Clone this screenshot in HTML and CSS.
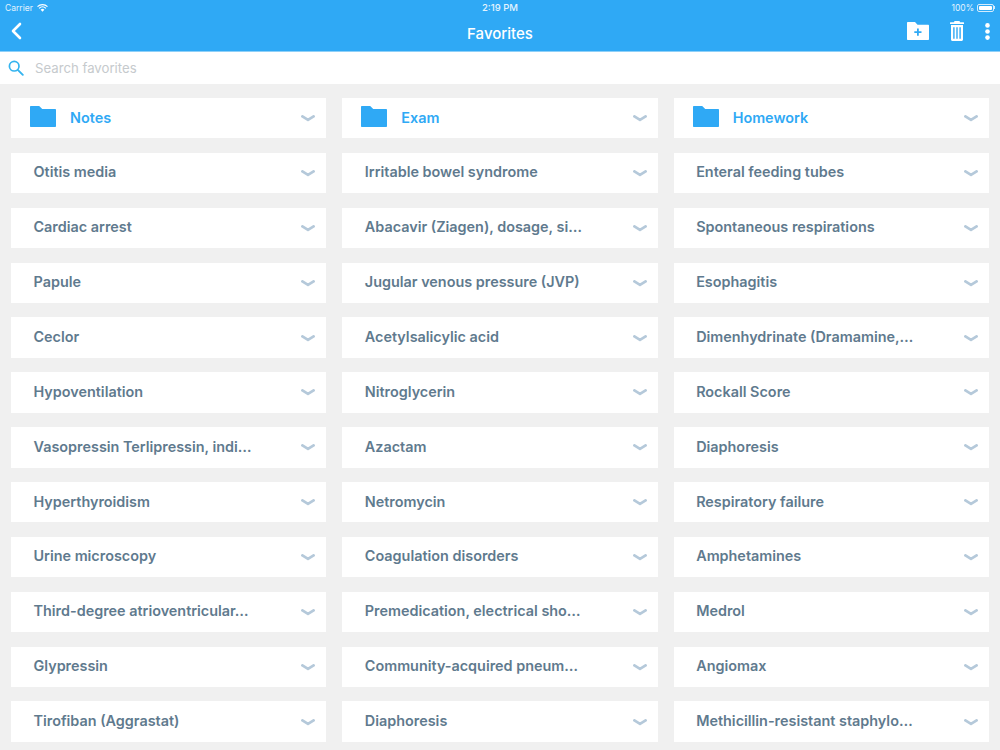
FILE: index.html
```html
<!DOCTYPE html>
<html lang="en">
<head>
<meta charset="utf-8">
<title>Favorites</title>
<link rel="stylesheet" href="styles.css">
</head>
<body>
<svg class="defs" width="0" height="0" aria-hidden="true">
  <symbol id="chev" viewBox="0 0 14 7"><path d="M1.400 1.400 7 4.900l5.600-3.500" fill="none" stroke="currentColor" stroke-width="2.700" stroke-linecap="round" stroke-linejoin="round"/></symbol>
  <symbol id="folder" viewBox="0 0 26 21"><path d="M0 1C0 .4.400 0 1 0h8.200l3 3H25c.6 0 1 .4 1 1v16c0 .6-.4 1-1 1H1c-.6 0-1-.4-1-1z" fill="#2fa9f5"/></symbol>
</svg>
<header class="appbar">
  <div class="status">
    <div class="status-left"><span>Carrier</span>
      <svg width="11" height="8" viewBox="0 0 12 9"><path d="M.4 3a8 8 0 0 1 11.200 0M2.200 4.900a5.400 5.400 0 0 1 7.600 0" fill="none" stroke="#fff" stroke-width="1.400"/><path d="M3.900 6.500a3 3 0 0 1 4.200 0L6 8.700z" fill="#fff"/></svg>
    </div>
    <span class="clock">2:19 PM</span>
    <div class="status-right"><span>100%</span><span class="battery"><span class="battery-fill"></span></span><span class="battery-tip"></span></div>
  </div>
  <div class="toolbar">
    <div class="toolbar-left">
      <svg width="12" height="18" viewBox="0 0 12 18"><path d="M10 2 3 9l7 7" fill="none" stroke="#fff" stroke-width="2.600" stroke-linecap="round" stroke-linejoin="round"/></svg>
    </div>
    <h1 class="title">Favorites</h1>
    <div class="actions">
      <svg width="22" height="18" viewBox="0 0 22 18"><path fill="#fff" fill-rule="evenodd" d="M0 1C0 .4.400 0 1 0h7l2.500 2.800H21c.6 0 1 .4 1 1V17c0 .6-.4 1-1 1H1c-.6 0-1-.4-1-1zM10 6.500v2.700H7.300v1.800H10v2.700h1.800V11h2.700V9.200h-2.700V6.500z"/></svg>
      <svg width="14" height="20" viewBox="0 0 14 20"><path fill="#fff" fill-rule="evenodd" d="M4.500 0h5l.5 1.300h3.500c.3 0 .5.200.5.500V3H0V1.800c0-.3.200-.5.500-.5H4zM1 4h12v14.500c0 .8-.7 1.500-1.500 1.500h-9C1.700 20 1 19.300 1 18.500zM3.200 6.300v11.400h1.400V6.300zM6.300 6.300v11.400h1.400V6.300zM9.400 6.300v11.400h1.400V6.300z"/></svg>
      <svg width="5" height="17" viewBox="0 0 5 17"><circle cx="2.500" cy="2.400" r="2.300" fill="#fff"/><circle cx="2.500" cy="8.500" r="2.300" fill="#fff"/><circle cx="2.500" cy="14.600" r="2.300" fill="#fff"/></svg>
    </div>
  </div>
</header>
<div class="search">
  <svg width="16" height="16" viewBox="0 0 16 16"><circle cx="6.200" cy="6.200" r="4.800" fill="none" stroke="#35b4ef" stroke-width="1.700"/><path d="m9.800 9.800 5 5" stroke="#35b4ef" stroke-width="1.900" stroke-linecap="round"/></svg>
  <span>Search favorites</span>
</div>
<main class="grid">
  <div class="card folder"><svg class="folder-icon"><use href="#folder"/></svg><span class="label">Notes</span><svg class="chev"><use href="#chev"/></svg></div>
  <div class="card folder"><svg class="folder-icon"><use href="#folder"/></svg><span class="label">Exam</span><svg class="chev"><use href="#chev"/></svg></div>
  <div class="card folder"><svg class="folder-icon"><use href="#folder"/></svg><span class="label">Homework</span><svg class="chev"><use href="#chev"/></svg></div>
  <div class="card"><span class="label">Otitis media</span><svg class="chev"><use href="#chev"/></svg></div>
  <div class="card"><span class="label">Irritable bowel syndrome</span><svg class="chev"><use href="#chev"/></svg></div>
  <div class="card"><span class="label">Enteral feeding tubes</span><svg class="chev"><use href="#chev"/></svg></div>
  <div class="card"><span class="label">Cardiac arrest</span><svg class="chev"><use href="#chev"/></svg></div>
  <div class="card"><span class="label">Abacavir (Ziagen), dosage, si…</span><svg class="chev"><use href="#chev"/></svg></div>
  <div class="card"><span class="label">Spontaneous respirations</span><svg class="chev"><use href="#chev"/></svg></div>
  <div class="card"><span class="label">Papule</span><svg class="chev"><use href="#chev"/></svg></div>
  <div class="card"><span class="label">Jugular venous pressure (JVP)</span><svg class="chev"><use href="#chev"/></svg></div>
  <div class="card"><span class="label">Esophagitis</span><svg class="chev"><use href="#chev"/></svg></div>
  <div class="card"><span class="label">Ceclor</span><svg class="chev"><use href="#chev"/></svg></div>
  <div class="card"><span class="label">Acetylsalicylic acid</span><svg class="chev"><use href="#chev"/></svg></div>
  <div class="card"><span class="label">Dimenhydrinate (Dramamine,…</span><svg class="chev"><use href="#chev"/></svg></div>
  <div class="card"><span class="label">Hypoventilation</span><svg class="chev"><use href="#chev"/></svg></div>
  <div class="card"><span class="label">Nitroglycerin</span><svg class="chev"><use href="#chev"/></svg></div>
  <div class="card"><span class="label">Rockall Score</span><svg class="chev"><use href="#chev"/></svg></div>
  <div class="card"><span class="label">Vasopressin Terlipressin, indi…</span><svg class="chev"><use href="#chev"/></svg></div>
  <div class="card"><span class="label">Azactam</span><svg class="chev"><use href="#chev"/></svg></div>
  <div class="card"><span class="label">Diaphoresis</span><svg class="chev"><use href="#chev"/></svg></div>
  <div class="card"><span class="label">Hyperthyroidism</span><svg class="chev"><use href="#chev"/></svg></div>
  <div class="card"><span class="label">Netromycin</span><svg class="chev"><use href="#chev"/></svg></div>
  <div class="card"><span class="label">Respiratory failure</span><svg class="chev"><use href="#chev"/></svg></div>
  <div class="card"><span class="label">Urine microscopy</span><svg class="chev"><use href="#chev"/></svg></div>
  <div class="card"><span class="label">Coagulation disorders</span><svg class="chev"><use href="#chev"/></svg></div>
  <div class="card"><span class="label">Amphetamines</span><svg class="chev"><use href="#chev"/></svg></div>
  <div class="card"><span class="label">Third-degree atrioventricular…</span><svg class="chev"><use href="#chev"/></svg></div>
  <div class="card"><span class="label">Premedication, electrical sho…</span><svg class="chev"><use href="#chev"/></svg></div>
  <div class="card"><span class="label">Medrol</span><svg class="chev"><use href="#chev"/></svg></div>
  <div class="card"><span class="label">Glypressin</span><svg class="chev"><use href="#chev"/></svg></div>
  <div class="card"><span class="label">Community-acquired pneum…</span><svg class="chev"><use href="#chev"/></svg></div>
  <div class="card"><span class="label">Angiomax</span><svg class="chev"><use href="#chev"/></svg></div>
  <div class="card"><span class="label">Tirofiban (Aggrastat)</span><svg class="chev"><use href="#chev"/></svg></div>
  <div class="card"><span class="label">Diaphoresis</span><svg class="chev"><use href="#chev"/></svg></div>
  <div class="card"><span class="label">Methicillin-resistant staphylo…</span><svg class="chev"><use href="#chev"/></svg></div>
</main>
</body>
</html>
```
FILE: styles.css
```css
* { box-sizing: border-box; }
html, body { margin: 0; height: 750px; overflow: hidden; }
body { background: #f0f0f0; font-family: Inter, "Liberation Sans", sans-serif; }
.defs { position: absolute; }
.appbar { height: 52px; background: #2fa9f5; color: #fff; display: flex; flex-direction: column; border-bottom: 1px solid #8fd0f8; }
.status { height: 15px; padding: 0 5px; display: flex; align-items: center; font-size: 8.500px; color: #e3f3fe; }
.status-left { display: flex; align-items: center; gap: 4px; width: 100px; }
.clock { flex: 1; text-align: center; font-size: 9.500px; font-weight: 500; }
.status-right { display: flex; align-items: center; justify-content: flex-end; width: 100px; }
.battery { width: 17px; height: 8px; border: 1px solid #d4ecfd; border-radius: 2px; margin-left: 3px; padding: 1px; display: flex; }
.battery-fill { flex: 1; background: #fff; border-radius: 1px; }
.battery-tip { width: 1px; height: 3px; background: #d4ecfd; }
.toolbar { flex: 1; display: grid; grid-template-columns: 1fr auto 1fr; align-items: center; padding: 0 10px; }
.toolbar-left { display: flex; padding-bottom: 4px; }
.title { margin: 0; font-size: 15px; font-weight: 500; }
.actions { display: flex; align-items: center; justify-content: flex-end; gap: 21px; padding-bottom: 4px; }
.search { height: 32px; background: #fff; display: flex; align-items: center; gap: 11px; padding: 0 0 1px 8px; font-size: 13.200px; color: #c6cacd; }
.grid { display: grid; grid-template-columns: repeat(3, 1fr); column-gap: 16px; row-gap: 14.470px; padding: 14px 11px 0; }
.card { height: 40.400px; background: #fff; display: flex; align-items: center; padding: 0 11px 2.200px 22.500px; color: #5f7a8e; font-size: 14.400px; font-weight: 600; }
.label { white-space: nowrap; }
.chev { width: 14px; height: 7px; color: #b5c9da; flex: none; margin-left: auto; margin-top: 3.200px; }
.folder { color: #2fa9f5; padding-left: 19px; }
.folder-icon { width: 26px; height: 21px; flex: none; margin-right: 14px; margin-bottom: 1px; }
```
